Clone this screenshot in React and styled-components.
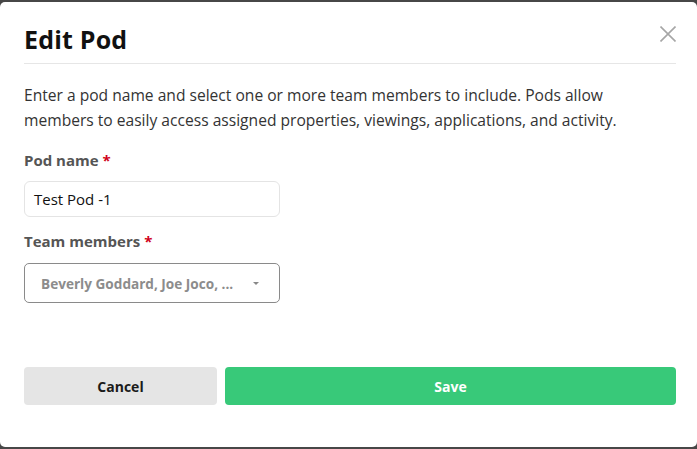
import React from "react";
import styled, { createGlobalStyle } from "styled-components";

const Global = createGlobalStyle`
  html, body { margin: 0; padding: 0; background: #474747; }
  body { font-family: "Open Sans", "Noto Sans", sans-serif; }
  * { box-sizing: border-box; }
`;

const Modal = styled.div`
  margin-top: 2px;
  width: 697px;
  height: 445px;
  background: #fff;
  border-radius: 5px;
  padding: 0 21px 0 24px;
  display: flex;
  flex-direction: column;
`;

const Header = styled.div`
  display: flex;
  align-items: center;
  justify-content: space-between;
  height: 62px;
  padding-top: 12px;
  border-bottom: 1px solid #e6e6e6;
`;

const Title = styled.h1`
  margin: 0;
  font-size: 25px;
  font-weight: 700;
  color: #111;
  letter-spacing: 0.2px;
`;

const Close = styled.button`
  border: 0;
  background: none;
  padding: 0;
  width: 16px;
  height: 16px;
  margin-top: -10px;
  cursor: pointer;
  display: flex;
`;

const Intro = styled.p`
  margin: 19px 0 0;
  font-size: 15.6px;
  line-height: 25px;
  color: #333;
`;

const Label = styled.div`
  margin-top: ${(p) => p.$top}px;
  font-size: 15px;
  font-weight: 700;
  color: #555;
  line-height: 20px;
`;

const Req = styled.span`
  color: #d0021b;
  margin-left: 4px;
`;

const Input = styled.div`
  margin-top: 11px;
  width: 256px;
  height: 36px;
  border: 1px solid #e4e4e4;
  border-radius: 6px;
  padding: 0 9px;
  display: flex;
  align-items: center;
  font-size: 15px;
  color: #111;
`;

const Select = styled.div`
  margin-top: 12px;
  width: 256px;
  height: 40px;
  border: 1px solid #8a8a8a;
  border-radius: 5px;
  padding: 0 20px 0 16px;
  display: flex;
  align-items: center;
  justify-content: space-between;
  font-size: 13.6px;
  font-weight: 700;
  color: #8c8c8c;
`;

const Caret = styled.span`
  width: 0;
  height: 0;
  border-left: 3px solid transparent;
  border-right: 3px solid transparent;
  border-top: 3px solid #888;
`;

const Actions = styled.div`
  margin-top: 64px;
  display: grid;
  grid-template-columns: 193px 1fr;
  gap: 8px;
`;

const Button = styled.button`
  height: 38px;
  border: 0;
  border-radius: 4px;
  font-family: "Open Sans", "Noto Sans", sans-serif;
  font-size: 14px;
  font-weight: 700;
  background: ${(p) => (p.$primary ? "#38c979" : "#e5e5e5")};
  color: ${(p) => (p.$primary ? "#fff" : "#1b1b1b")};
`;

export default function App() {
  return (
    <>
      <Global />
      <Modal>
        <Header>
          <Title>Edit Pod</Title>
          <Close aria-label="Close">
            <svg width="16" height="16" viewBox="0 0 16 16">
              <path d="M0.5 0.5L15.5 15.5M15.5 0.5L0.5 15.5" stroke="#a6a6a6" strokeWidth="1.6" />
            </svg>
          </Close>
        </Header>
        <Intro>
          Enter a pod name and select one or more team members to include. Pods allow
          <br />
          members to easily access assigned properties, viewings, applications, and activity.
        </Intro>
        <Label $top={17}>
          Pod name<Req>*</Req>
        </Label>
        <Input>Test Pod -1</Input>
        <Label $top={14}>
          Team members<Req>*</Req>
        </Label>
        <Select>
          <span>Beverly Goddard, Joe Joco, ...</span>
          <Caret />
        </Select>
        <Actions>
          <Button>Cancel</Button>
          <Button $primary>Save</Button>
        </Actions>
      </Modal>
    </>
  );
}
